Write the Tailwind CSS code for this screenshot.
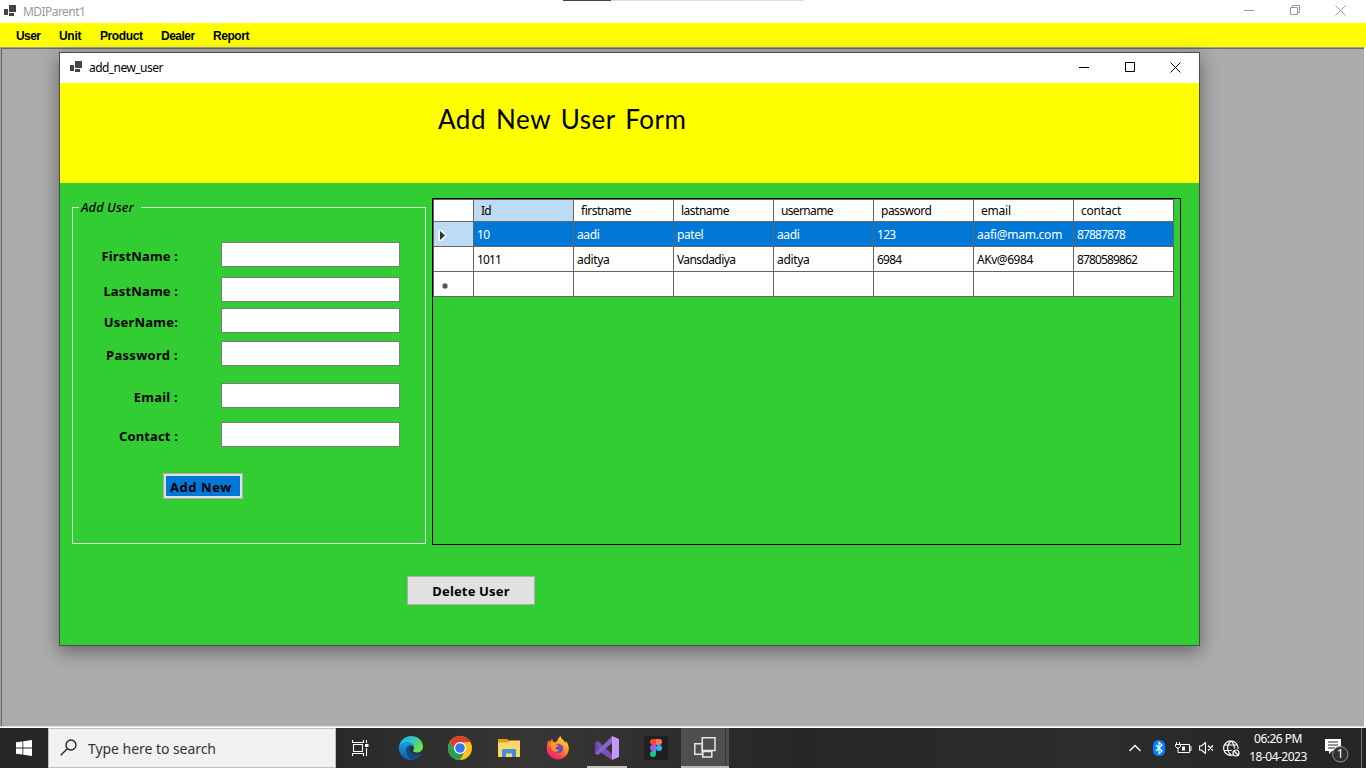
<!DOCTYPE html>
<html lang="en">
<head>
<meta charset="utf-8">
<title>MDIParent1</title>
<script src="https://cdn.jsdelivr.net/npm/@tailwindcss/browser@4"></script>
</head>
<body class="w-[1366px] h-[768px] overflow-hidden relative flex flex-col bg-white font-['Noto_Sans',sans-serif] text-black">

<!-- parent window caption -->
<header class="relative h-[23px] flex items-center bg-white shrink-0">
  <svg class="ml-1 mt-[-2px]" width="12" height="11" viewBox="0 0 12 11" fill="#444"><path d="M0 4h4v6H0zM5 0h7v7H5zM5 8h5v3H5z"/></svg>
  <span class="ml-[7px] text-[12px] leading-[23px] tracking-[-0.55px] text-[#999]">MDIParent1</span>
  <div class="absolute left-[563px] top-0 w-[241px] h-px bg-[#ddd]"><div class="w-12 h-px bg-[#444]"></div></div>
  <div class="ml-auto flex items-center mr-[20px] gap-[35px] text-[#999]">
    <svg class="mt-[-2px]" width="11" height="11" viewBox="0 0 11 11" fill="none" stroke="currentColor"><path d="M1 5.500h10"/></svg>
    <svg class="mt-[-2px]" width="11" height="11" viewBox="0 0 11 11" fill="none" stroke="currentColor"><path d="M1.500 2.500h7v7h-7zM3.500 2.500v-2h7v7h-2"/></svg>
    <svg class="mt-[-2px]" width="11" height="11" viewBox="0 0 11 11" fill="none" stroke="currentColor"><path d="M.5.500l10 10M10.500.500l-10 10"/></svg>
  </div>
</header>

<!-- menu strip -->
<nav class="h-6 shrink-0 flex items-center bg-[#ff0] pl-4 pt-[2px] font-['Liberation_Sans',sans-serif] font-bold text-[12px]">
  <span class="w-[43px] tracking-[-0.6px]">User</span><span class="w-[41px] tracking-[-0.3px]">Unit</span><span class="w-[61px] tracking-[-0.4px]">Product</span><span class="w-[52px] tracking-[-0.5px]">Dealer</span><span class="tracking-[-0.45px]">Report</span>
</nav>

<!-- MDI client area -->
<main class="relative h-[681px] shrink-0 bg-white pb-px">
  <div class="h-[680px] w-[1365px] bg-[#ababab] border-t border-l border-t-[#a0a0a0] border-l-[#a0a0a0] border-r border-b border-r-white border-b-[#e3e3e3]">
    <div class="h-full border-t border-l border-[#696969]"></div>
  </div>

  <section class="absolute left-[59px] top-[5px] w-[1141px] h-[594px] border border-[#4b4b4b] bg-[#32cd32] shadow-[0_5px_17px_rgba(0,0,0,0.42)] flex flex-col">
    <div class="h-[30px] shrink-0 bg-white flex items-center">
      <svg class="ml-[10px] mt-[-3px]" width="12" height="11" viewBox="0 0 12 11" fill="#444"><path d="M0 4h4v6H0zM5 0h7v7H5zM5 8h5v3H5z"/></svg>
      <span class="ml-[7px] text-[12px] tracking-[-0.55px]">add_new_user</span>
      <div class="ml-auto flex mr-[18px] mt-[-2px] gap-[35px]">
        <svg width="11" height="11" viewBox="0 0 11 11" fill="none" stroke="#000"><path d="M1 5.500h10"/></svg>
        <svg width="11" height="11" viewBox="0 0 11 11" fill="none" stroke="#000"><path d="M1.500.500h9v9h-9z"/></svg>
        <svg width="11" height="11" viewBox="0 0 11 11" fill="none" stroke="#000"><path d="M.5.500l10 10M10.500.500l-10 10"/></svg>
      </div>
    </div>
    <div class="h-[100px] shrink-0 bg-[#ff0] pl-[378px] pt-[17px]">
      <h1 class="font-['Lato',sans-serif] text-[26px] leading-[38px] tracking-[0.5px] [word-spacing:3px] whitespace-nowrap">Add New User Form</h1>
    </div>

    <div class="flex pl-3 pt-[15px]">
      <!-- user form -->
      <div class="relative mt-[9px] w-[354px] h-[337px] border border-[#d9eed9] pt-[34px] pl-[3px]">
        <div class="absolute left-[6px] top-[-10px] w-[62px] h-[19px] bg-[#32cd32] pl-[2px] text-[13px] leading-[18px] italic font-medium whitespace-nowrap">Add User</div>
        <div class="flex flex-col font-bold text-[13px] leading-[25px]">
          <div class="flex h-[35px]"><label class="w-[102px] text-right mt-[2px] whitespace-nowrap tracking-[0.15px]">FirstName :</label><input class="ml-[43px] w-[179px] h-[25px] bg-white border border-[#7a7a7a]"></div>
          <div class="flex h-[31px]"><label class="w-[102px] text-right mt-[2px] whitespace-nowrap tracking-[0.15px]">LastName :</label><input class="ml-[43px] w-[179px] h-[25px] bg-white border border-[#7a7a7a]"></div>
          <div class="flex h-[33px]"><label class="w-[102px] text-right mt-[2px] whitespace-nowrap tracking-[0.2px]">UserName:</label><input class="ml-[43px] w-[179px] h-[25px] bg-white border border-[#7a7a7a]"></div>
          <div class="flex h-[42px]"><label class="w-[102px] text-right mt-[2px] whitespace-nowrap tracking-[0.3px]">Password :</label><input class="ml-[43px] w-[179px] h-[25px] bg-white border border-[#7a7a7a]"></div>
          <div class="flex h-[39px]"><label class="w-[102px] text-right mt-[2px] whitespace-nowrap tracking-[0.25px]">Email :</label><input class="ml-[43px] w-[179px] h-[25px] bg-white border border-[#7a7a7a]"></div>
          <div class="flex h-[51px]"><label class="w-[102px] text-right mt-[2px] whitespace-nowrap tracking-[0.15px]">Contact :</label><input class="ml-[43px] w-[179px] h-[25px] bg-white border border-[#7a7a7a]"></div>
        </div>
        <button class="ml-[87px] block w-[80px] h-[26px] border border-[#adadad] bg-[#e1e1e1] p-[2px]"><span class="block w-[74px] h-5 bg-[#0078d7] text-left pl-1 text-[13px] leading-[22px] font-bold whitespace-nowrap tracking-[0.55px]">Add New</span></button>
      </div>

      <!-- data grid -->
      <div class="ml-[6px] w-[749px] h-[347px] border border-black">
        <div class="w-[741px] grid grid-cols-[40px_repeat(7,100px)] grid-rows-[22px_25px_25px_25px] border-t border-l border-[#646464] text-[12px] leading-[26px] tracking-[-0.2px] [&>*]:border-r [&>*]:border-b [&>*]:border-[#646464] [&>*]:whitespace-nowrap [&>*]:pl-[3px]">
          <div class="bg-white"></div>
          <div class="bg-[#bcdcf4] leading-[22px] !pl-[7px] tracking-[-0.7px]">Id</div>
          <div class="bg-white leading-[22px] !pl-[7px] tracking-[-0.5px]">firstname</div>
          <div class="bg-white leading-[22px] !pl-[7px] tracking-[-0.5px]">lastname</div>
          <div class="bg-white leading-[22px] !pl-[7px] tracking-[-0.65px]">username</div>
          <div class="bg-white leading-[22px] !pl-[7px] tracking-[-0.5px]">password</div>
          <div class="bg-white leading-[22px] !pl-[7px]">email</div>
          <div class="bg-white leading-[22px] !pl-[7px]">contact</div>

          <div class="bg-[#bcdcf4] flex items-center !pl-[4px]"><svg class="mt-[2px]" width="9" height="13" viewBox="0 0 9 13"><path d="M0 1h4l5 5.500-5 5.500H0z" fill="#fff" opacity=".7"/><path d="M2 2l5 4.500-5 4.500z" fill="#333"/></svg></div>
          <div class="bg-[#0078d7] text-white tracking-[-0.6px]">10</div>
          <div class="bg-[#0078d7] text-white tracking-[-0.4px]">aadi</div>
          <div class="bg-[#0078d7] text-white tracking-[-0.4px]">patel</div>
          <div class="bg-[#0078d7] text-white tracking-[-0.4px]">aadi</div>
          <div class="bg-[#0078d7] text-white tracking-[-0.7px]">123</div>
          <div class="bg-[#0078d7] text-white tracking-[-0.25px]">aafi@mam.com</div>
          <div class="bg-[#0078d7] text-white tracking-[-0.87px]">87887878</div>

          <div class="bg-white"></div>
          <div class="bg-white tracking-[-0.87px]">1011</div>
          <div class="bg-white tracking-[-0.35px]">aditya</div>
          <div class="bg-white tracking-[-0.6px]">Vansdadiya</div>
          <div class="bg-white tracking-[-0.35px]">aditya</div>
          <div class="bg-white tracking-[-0.75px]">6984</div>
          <div class="bg-white tracking-[-0.45px]">AKv@6984</div>
          <div class="bg-white tracking-[-0.87px]">8780589862</div>

          <div class="bg-white flex items-center !pl-[8px]"><svg class="mt-[4px]" width="6" height="6" viewBox="0 0 6 6" stroke="#444" stroke-width="1.100"><path d="M3 0v6M0 3h6M.8.800l4.400 4.400M5.200.800L.8 5.200"/></svg></div>
          <div class="bg-white"></div><div class="bg-white"></div><div class="bg-white"></div><div class="bg-white"></div><div class="bg-white"></div><div class="bg-white"></div><div class="bg-white"></div>
        </div>
      </div>
    </div>
    <button class="mt-[31px] ml-[347px] w-[128px] h-[29px] border border-[#adadad] bg-[#e1e1e1] font-bold text-[13px] leading-[27px] pt-px tracking-[0.15px]">Delete User</button>
  </section>
</main>

<!-- taskbar -->
<footer class="h-10 shrink-0 flex bg-[linear-gradient(90deg,#252628_0%,#292929_25%,#383634_39%,#302f2e_48%,#262728_58%,#2c2c2c_80%,#242526_100%)] text-white">
  <div class="w-12 flex items-center justify-center"><svg width="16" height="16" viewBox="0 0 16 16" fill="#fff"><path d="M0 2.300L6.500 1.400v6.200H0zM7.300 1.300L16 0v7.600H7.300zM0 8.400h6.500v6.200L0 13.700zM7.300 8.400H16V16l-8.700-1.300z"/></svg></div>
  <div class="w-[288px] bg-[#f1f1f1] border border-[#bfbfbf] flex items-center text-[#333]">
    <svg class="ml-[11px] mt-[-2px]" width="17" height="17" viewBox="0 0 17 17" fill="none" stroke="#222" stroke-width="1.300"><circle cx="11" cy="6" r="5"/><path d="M7.300 9.700L.7 16.300"/></svg>
    <span class="ml-[11px] text-[14px] mt-px tracking-[-0.05px] whitespace-nowrap">Type here to search</span>
  </div>
  <div class="w-12 flex items-center justify-center"><svg width="17" height="16" viewBox="0 0 17 16" fill="none" stroke="#fff" stroke-width="1.100"><path d="M1.500 4.500h9v7h-9zM.5 0v2.500h11V0M.5 16v-2.500h11V16M14.500 0v3M14.500 8v8"/><path fill="#fff" stroke="none" d="M13 4h3.500v3H13z"/></svg></div>
  <div class="w-[2px]"></div>

  <!-- Edge -->
  <div class="w-[49px] flex items-center justify-center"><svg width="24" height="24" viewBox="0 0 24 24"><defs><linearGradient id="eg" x1="0" y1="0" x2="1" y2=".5"><stop offset="0" stop-color="#1ba8e8"/><stop offset=".5" stop-color="#2ac5c8"/><stop offset="1" stop-color="#6be04c"/></linearGradient><linearGradient id="eb" x1="0" y1="0" x2="0" y2="1"><stop offset="0" stop-color="#1b9be4"/><stop offset="1" stop-color="#0b5cb0"/></linearGradient></defs><path d="M0 11.500C.5 5 5.500 0 12 0c7 0 12 5 12 10.500 0 4-3 6-6 6-2.500 0-4-.8-4-1.700 0-.7 1-1.200 1-3C15 9 12.500 7 9 6.500 5 6 1.500 8.500 0 11.500z" fill="url(#eg)"/><path d="M0 11.500C1.500 8 5 5.800 9 6.500c3.500.5 6 2.700 6 5.300-.5-1.300-2-2.300-3.500-2.300C9 9.500 7 12 7.500 15.500 8 20 11 23 14.500 23.700 7 25.500 0 20 0 12z" fill="url(#eb)"/><path d="M11 9.500C9 9.700 7 12 7.500 15.500 8 20 11 23.300 14.500 23.700c3.500-.7 6.500-2.900 8-5.500.3-.6-.2-.8-.6-.6-4 2-9.400.8-11-2.800-.9-2 0-4 1-5.200z" fill="#124a82"/></svg></div>
  <!-- Chrome -->
  <div class="w-[49px] flex items-center justify-center"><svg width="24" height="24" viewBox="0 0 24 24"><circle cx="12" cy="12" r="12" fill="#f9c31c"/><path d="M1.600 6A12 12 0 0 1 22.400 6L12 6.500 7 15z" fill="#dc4032"/><path d="M1.600 6A12 12 0 0 0 12 24l5-9H7z" fill="#26a152"/><circle cx="12" cy="12" r="6" fill="#fff"/><circle cx="12" cy="12" r="4.800" fill="#3478ee"/></svg></div>
  <!-- File Explorer -->
  <div class="w-[49px] flex items-center justify-center"><svg width="22" height="18" viewBox="0 0 22 18"><path d="M0 0h9.500l1.500 2v3H0z" fill="#dd9f17"/><path d="M0 3.500h10l1-2h11V18H0z" fill="#fbd668"/><path d="M4 18v-6.500q0-1.500 1.500-1.500h11q1.500 0 1.500 1.500V18h-4v-3.500H8V18z" fill="#3c93d8"/></svg></div>
  <!-- Firefox -->
  <div class="w-[49px] flex items-center justify-center"><svg width="24" height="24" viewBox="0 0 24 24"><defs><linearGradient id="ff" x1=".9" y1="0" x2=".2" y2="1"><stop offset="0" stop-color="#fff23d"/><stop offset=".4" stop-color="#ff9a28"/><stop offset=".75" stop-color="#ff3b4d"/><stop offset="1" stop-color="#e51c82"/></linearGradient></defs><path d="M1 8.500L2.500 4l1.300 2L6 3l1.500 3L10 6c2-1.500 2-4 4.500-6 .5 3 3.500 4 5 7l.5-2c2 2.500 3 5 2.800 8.500C22.300 19 17.500 23.500 12 23.500S.8 19 .8 13z" fill="url(#ff)"/><path d="M7.500 10c1.500-2 5-2.500 7.500-1.300 2.500 1.300 3 4.500 1 6.800-2.300 2.500-7.500 2.200-9-1.500 1.500 1 3.500.5 5-.5-2 0-4-.5-4.500-3.500z" fill="#7047d0"/><path d="M3.800 8c2-1.500 4.200-1 6 .5l3 .5c-.5 1.500-3 1.500-3.300 3-.5 2 2 2.500 4 1.500-1.500 3-6 3-7.500 0z" fill="#ff9b22"/></svg></div>
  <!-- Visual Studio -->
  <div class="relative w-[49px] flex items-center justify-center"><svg width="24" height="24" viewBox="0 0 24 24"><path d="M0 6.500L3 5l14 13v6L3 14.500z" fill="#7952b8"/><path d="M0 6.500L3 5v14l-3-1.500z" fill="#6a45a8"/><path d="M0 17.500L17 0v7L3 19z" fill="#8a62cc"/><path d="M17 0l7 3v18l-7 3z" fill="#c298f7"/></svg><div class="absolute left-[5px] bottom-0 w-10 h-[2px] bg-[#c3c0be]"></div></div>
  <!-- Figma -->
  <div class="w-[49px] flex items-center justify-center"><div class="w-6 h-6 bg-[#202020] flex items-center justify-center"><svg width="12" height="18" viewBox="0 0 12 18"><path d="M6 0H3a3 3 0 0 0 0 6h3z" fill="#f24e1e"/><path d="M6 0h3a3 3 0 0 1 0 6H6z" fill="#ff7262"/><path d="M6 6H3a3 3 0 0 0 0 6h3z" fill="#a259ff"/><circle cx="9" cy="9" r="3" fill="#1abcfe"/><path d="M6 12H3a3 3 0 1 0 3 3z" fill="#0acf83"/></svg></div></div>
  <!-- running WinForms app -->
  <div class="ml-px w-[48px] flex bg-[#504f4f] border-b-2 border-[#bab8b6]"><div class="w-[45px] border-r border-[#353535] flex items-center justify-center"><svg class="ml-[4px] mt-[1px]" width="22" height="21" viewBox="0 0 22 21" fill="none" stroke="#e6e6e6" stroke-width="1.500"><path d="M.8 6.800h7.500v10.500H.8z"/><path d="M8.800 14.500h9v5.500h-9z"/><path fill="#504f4f" d="M8.300.800h12.700v12.700H8.300z"/></svg></div></div>

  <!-- notification area -->
  <div class="ml-auto flex items-center">
    <svg width="12" height="8" viewBox="0 0 12 8" fill="none" stroke="#fff" stroke-width="1.300"><path d="M.5 7L6 1.500 11.500 7"/></svg>
    <svg class="ml-3" width="12" height="16" viewBox="0 0 12 16"><rect width="12" height="16" rx="5.500" fill="#0082fc"/><path d="M3 5l6 6-3 2.500v-11L9 5l-6 6" fill="none" stroke="#fff" stroke-width="1.100"/></svg>
    <svg class="ml-[10px]" width="17" height="12" viewBox="0 0 17 12" fill="none" stroke="#fff"><path d="M6 2.500h8.500v8h-9M14.500 4.500h1.500v4h-1.500M1.500 0v2M4.500 0v2M.5 2.500h5v2l-1.500 1.500H2L.5 4.500zM3 6v4.500h2.500"/><path d="M7 4.500h3v4H7z" fill="#fff" stroke="none"/></svg>
    <svg class="ml-[7px]" width="15" height="12" viewBox="0 0 15 12" fill="none" stroke="#fff" stroke-width="1.150"><path d="M.5 4v4h2l4 3.500V.500L2.500 4zM9 3.500l5 5M14 3.500l-5 5"/></svg>
    <svg class="ml-[9px]" width="17" height="17" viewBox="0 0 17 17" fill="none" stroke="#fff" stroke-width="1.150"><path d="M10 15A7.200 7.200 0 1 1 15 9M.8 5h14M.8 10.500h8M8 1C3.500 5 3.500 11 8 15M8 1c2.500 2 3.500 4.500 3.500 7.500"/><circle cx="13" cy="13" r="3" stroke-width="1.200"/><path d="M11 11l4 4"/></svg>
    <div class="ml-[7px] w-[62px] text-center text-[12px] leading-[18px] tracking-[-0.5px] whitespace-nowrap pb-px"><div>06:26 PM</div><div>18-04-2023</div></div>
    <svg class="ml-[15px] mt-[6px]" width="26" height="26" viewBox="0 0 26 26"><path d="M1 1h16v12H8l-3 3v-3H1z" fill="#fff"/><path d="M4 4h10M4 7h10M4 10h7" stroke="#2a2a2a"/><circle cx="16.300" cy="16.300" r="7.700" fill="#303030" stroke="#999"/><text x="16.300" y="20.300" fill="#fff" font-family="Noto Sans" font-size="12" text-anchor="middle">1</text></svg>
    <div class="ml-[11px] w-[5px] h-10 border-l border-[#777]"></div>
  </div>
</footer>
</body>
</html>
